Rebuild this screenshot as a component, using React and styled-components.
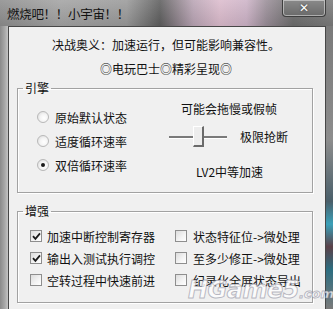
import React from "react";
import styled, { createGlobalStyle } from "styled-components";

const Global = createGlobalStyle`
  html, body { margin: 0; padding: 0; background: #6e6e6e; }
  body { font-family: "Noto Sans CJK SC", "Noto Sans", sans-serif; }
`;

const Window = styled.div`
  position: relative;
  width: 333px;
  height: 309px;
  overflow: hidden;
  display: flex;
  flex-direction: column;
  background: #8c8c8c;
`;

const TitleBar = styled.div`
  height: 26px;
  flex: none;
  display: flex;
  align-items: center;
  justify-content: space-between;
  padding-left: 7px;
  box-sizing: border-box;
  background:
    linear-gradient(to bottom, rgba(255,255,255,0.12), rgba(0,0,0,0.08)),
    linear-gradient(to right, #8e8e8e 0%, #a3a3a3 18%, #9a9a9a 38%, #5e5e5e 48%, #b9a4b4 58%, #dcbccd 66%, #cdb3c7 74%, #9a8e98 80%, #6d6d6d 88%, #7b7b7b 100%);
`;

const Title = styled.span`
  font-size: 12.5px;
  line-height: 16px;
  color: #111;
  letter-spacing: -0.3px;
  margin-top: 1px;
`;

const CloseButton = styled.div`
  align-self: flex-start;
  width: 44px;
  height: 17px;
  margin-right: 7px;
  box-sizing: border-box;
  border: 1px solid #3e3e3e;
  border-top: none;
  border-radius: 0 0 4px 4px;
  box-shadow: inset 0 0 0 1px rgba(255,255,255,0.45);
  background: linear-gradient(to bottom, #8a8a8a, #6a6a6a);
  display: flex;
  align-items: center;
  justify-content: center;
  color: #fff;
  font-family: "DejaVu Sans", sans-serif;
  font-weight: bold;
  font-size: 12px;
  line-height: 12px;
  text-shadow: 0 0 2px #333;
`;

const Body = styled.div`
  flex: 1;
  display: flex;
  min-height: 0;
`;

const SideFrame = styled.div`
  flex: none;
  width: ${(p) => p.$w}px;
  background: ${(p) => p.$bg};
`;

const Client = styled.div`
  flex: 1;
  background: #f0f0f0;
  border: 1px solid #474747;
  border-bottom: none;
  display: flex;
  flex-direction: column;
  align-items: stretch;
  padding: 10px 12px 0 8px;
`;

const Line = styled.div`
  font-size: 12px;
  line-height: 16px;
  color: #111;
  text-align: center;
  margin-bottom: ${(p) => p.$mb || 0}px;
  padding-left: ${(p) => p.$pl || 0}px;
`;

const Group = styled.fieldset`
  margin: ${(p) => p.$mt}px 0 0 0;
  padding: 0;
  height: ${(p) => p.$h}px;
  box-sizing: border-box;
  border: 1px solid #a2a2a2;
  box-shadow: 1px 1px 0 #fff, inset 1px 1px 0 #fff;
  min-width: 0;
`;

const Legend = styled.legend`
  margin-left: 5px;
  padding: 0 2px;
  font-size: 12px;
  line-height: 14px;
  color: #111;
`;

const GroupRow = styled.div`
  display: flex;
  align-items: flex-start;
`;

const Column = styled.div`
  display: flex;
  flex-direction: column;
  align-items: ${(p) => p.$align || "flex-start"};
  gap: ${(p) => p.$gap}px;
  padding-top: ${(p) => p.$pt}px;
  padding-left: ${(p) => p.$pl}px;
  width: ${(p) => (p.$w ? `${p.$w}px` : "auto")};
  box-sizing: border-box;
  flex: none;
`;

const Option = styled.div`
  display: flex;
  align-items: center;
  gap: ${(p) => p.$gap}px;
  height: 16px;
  font-size: 12px;
  color: #111;
  white-space: nowrap;
`;

const RadioDot = styled.span`
  width: 12px;
  height: 12px;
  box-sizing: border-box;
  border-radius: 50%;
  border: 1px solid #b8b8b8;
  background: radial-gradient(circle at 60% 60%, #ffffff 0%, #f4f4f4 45%, #d6d6d6 100%);
  display: flex;
  align-items: center;
  justify-content: center;

  &::after {
    content: "";
    width: 4px;
    height: 4px;
    border-radius: 50%;
    background: ${(p) => (p.$on ? "#1a1a1a" : "transparent")};
  }
`;

const CheckBox = styled.span`
  width: 12px;
  height: 12px;
  box-sizing: border-box;
  border: 1px solid #8e8e8e;
  background: linear-gradient(135deg, #dcdcdc 0%, #f4f4f4 60%, #ffffff 100%);
  display: flex;
  align-items: center;
  justify-content: center;
`;

const Caption = styled.div`
  font-size: 12px;
  line-height: 16px;
  color: #111;
  white-space: nowrap;
  padding-left: ${(p) => p.$pl || 0}px;
  margin-top: ${(p) => p.$mt || 0}px;
`;

const SliderRow = styled.div`
  display: flex;
  align-items: center;
  height: 22px;
  margin-top: ${(p) => p.$mt || 0}px;
`;

const Track = styled.div`
  width: 58px;
  height: 22px;
  display: flex;
  align-items: center;
  position: relative;
`;

const TrackLine = styled.div`
  flex: 1;
  height: 2px;
  background: #7a7a7a;
  border-bottom: 1px solid #fff;
`;

const Thumb = styled.div`
  position: absolute;
  left: 24px;
  top: 0;
  width: 11px;
  height: 21px;
  box-sizing: border-box;
  background: #ededed;
  border-left: 1px solid #fff;
  border-top: 1px solid #fff;
  border-right: 2px solid #6a6a6a;
  border-bottom: 2px solid #6a6a6a;
`;

const Watermark = styled.div`
  position: absolute;
  left: 188px;
  top: 276px;
  font-family: "DejaVu Sans", sans-serif;
  font-weight: bold;
  font-style: italic;
  font-size: 24px;
  letter-spacing: -0.5px;
  color: rgba(255, 255, 255, 0.8);
  -webkit-text-stroke: 1px rgba(120, 120, 140, 0.5);
  pointer-events: none;

  small {
    font-size: 13px;
    letter-spacing: 0;
  }
`;

const Check = () => (
  <svg width="9" height="9" viewBox="0 0 9 9">
    <path d="M1 4.2 L3.4 6.8 L8 1.4" fill="none" stroke="#1a1a1a" strokeWidth="1.8" />
  </svg>
);

const Radio = ({ on, children }) => (
  <Option $gap={6}>
    <RadioDot $on={on} />
    {children}
  </Option>
);

const Checked = ({ on, gap, children }) => (
  <Option $gap={gap}>
    <CheckBox>{on && <Check />}</CheckBox>
    {children}
  </Option>
);

export default function App() {
  return (
    <Window>
      <Global />
      <TitleBar>
        <Title>燃烧吧！！小宇宙！！</Title>
        <CloseButton>✕</CloseButton>
      </TitleBar>
      <Body>
        <SideFrame $w={8} $bg="linear-gradient(to right, #8a8a8a, #a8a8a8 60%, #c4c4c4)" />
        <Client>
          <Line $mb={8} $pl={2}>决战奥义：加速运行，但可能影响兼容性。</Line>
          <Line $pl={2}>◎电玩巴士◎精彩呈现◎</Line>

          <Group $mt={4} $h={112}>
            <Legend>引擎</Legend>
            <GroupRow>
              <Column $pt={14} $pl={19} $gap={8} $w={151}>
                <Radio>原始默认状态</Radio>
                <Radio>适度循环速率</Radio>
                <Radio on>双倍循环速率</Radio>
              </Column>
              <Column $pt={6} $pl={0} $gap={0} $w={125}>
                <Caption $pl={12}>可能会拖慢或假帧</Caption>
                <SliderRow $mt={9}>
                  <Track>
                    <TrackLine />
                    <Thumb />
                  </Track>
                  <Caption $pl={13}>极限抢断</Caption>
                </SliderRow>
                <Caption $pl={27} $mt={16}>LV2中等加速</Caption>
              </Column>
            </GroupRow>
          </Group>

          <Group $mt={11} $h={99}>
            <Legend>增强</Legend>
            <GroupRow>
              <Column $pt={10} $pl={12} $gap={6} $w={157}>
                <Checked on gap={5}>加速中断控制寄存器</Checked>
                <Checked on gap={5}>输出入测试执行调控</Checked>
                <Checked gap={5}>空转过程中快速前进</Checked>
              </Column>
              <Column $pt={10} $pl={0} $gap={6}>
                <Checked gap={6}>状态特征位-&gt;微处理</Checked>
                <Checked gap={6}>至多少修正-&gt;微处理</Checked>
                <Checked gap={6}>纪录化全屏状态导出</Checked>
              </Column>
            </GroupRow>
          </Group>
        </Client>
        <SideFrame $w={7} $bg="linear-gradient(to bottom, #7a7a7a 0%, #8d8d8d 40%, #4a5f6a 62%, #3aa0b8 70%, #5a4048 78%, #2c6d80 86%, #7a7a7a 100%)" />
      </Body>
      <Watermark>
        HGame5<small>.com</small>
      </Watermark>
    </Window>
  );
}
